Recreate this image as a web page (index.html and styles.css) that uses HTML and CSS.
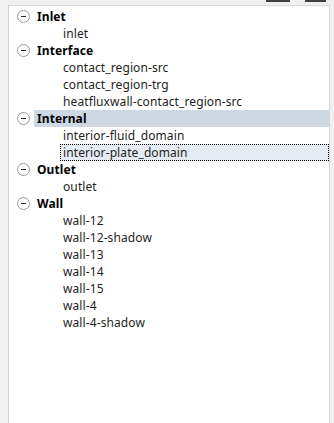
FILE: index.html
```html
<!DOCTYPE html>
<html lang="en">
<head>
    <meta charset="UTF-8">
    <title>Boundary Zones</title>
    <link rel="stylesheet" href="styles.css">
</head>
<body>
    <div class="toolbar">
        <span class="tool-btn btn-a"></span>
        <span class="tool-btn btn-b"></span>
    </div>
    <div class="tree-panel">
        <ul class="tree">
            <li class="group">
                <div class="group-row"><span class="toggle"></span><span class="group-label">Inlet</span></div>
                <ul class="children">
                    <li class="item">inlet</li>
                </ul>
            </li>
            <li class="group">
                <div class="group-row"><span class="toggle"></span><span class="group-label">Interface</span></div>
                <ul class="children">
                    <li class="item">contact_region-src</li>
                    <li class="item">contact_region-trg</li>
                    <li class="item">heatfluxwall-contact_region-src</li>
                </ul>
            </li>
            <li class="group">
                <div class="group-row"><span class="toggle"></span><span class="group-label highlighted">Internal</span></div>
                <ul class="children">
                    <li class="item">interior-fluid_domain</li>
                    <li class="item selected">interior-plate_domain</li>
                </ul>
            </li>
            <li class="group">
                <div class="group-row"><span class="toggle"></span><span class="group-label">Outlet</span></div>
                <ul class="children">
                    <li class="item">outlet</li>
                </ul>
            </li>
            <li class="group">
                <div class="group-row"><span class="toggle"></span><span class="group-label">Wall</span></div>
                <ul class="children">
                    <li class="item">wall-12</li>
                    <li class="item">wall-12-shadow</li>
                    <li class="item">wall-13</li>
                    <li class="item">wall-14</li>
                    <li class="item">wall-15</li>
                    <li class="item">wall-4</li>
                    <li class="item">wall-4-shadow</li>
                </ul>
            </li>
        </ul>
    </div>
</body>
</html>
```

FILE: styles.css
```css
html, body {
    height: 100%;
}

body {
    margin: 0;
    background-color: #f0f0f0;
    font-family: 'Noto Sans', 'Open Sans', sans-serif;
    font-size: 12px;
    letter-spacing: 0.1px;
    color: #1e1e1e;
    overflow: hidden;
}

.toolbar {
    display: flex;
    justify-content: flex-end;
    height: 5px;
    padding-right: 8px;
}

.tool-btn {
    display: block;
    height: 2px;
    background-color: #3f3f3f;
}

.btn-a {
    width: 24px;
    margin-right: 15px;
}

.btn-b {
    width: 21px;
}

.tree-panel {
    margin-left: 8px;
    width: 320px;
    height: 420px;
    background-color: #fff;
    border-top: 1px solid #dadada;
    border-left: 1px solid #d0d0d0;
    border-right: 1px solid #d6d6d6;
    padding-top: 2px;
}

.tree,
.children {
    list-style: none;
    margin: 0;
    padding: 0;
}

.group-row {
    display: flex;
    align-items: center;
    height: 17px;
}

.toggle {
    position: relative;
    box-sizing: border-box;
    width: 13px;
    height: 13px;
    margin-left: 8px;
    margin-right: 4px;
    border: 1px solid #9a9a9a;
    border-radius: 50%;
}

.toggle::after {
    content: "";
    position: absolute;
    left: 3px;
    top: 5px;
    width: 5px;
    height: 1px;
    background-color: #2a2a2a;
}

.group-label {
    flex: 1;
    height: 17px;
    line-height: 17px;
    padding-left: 3px;
    font-weight: bold;
    color: #000;
}

.group-label.highlighted {
    background-color: #cdd8e3;
}

.item {
    height: 17px;
    line-height: 17px;
    padding-left: 54px;
}

.item.selected {
    box-sizing: border-box;
    margin-left: 51px;
    padding-left: 2px;
    background-color: #e5ebf2;
    border: 1px dotted #000;
    line-height: 15px;
}
```
